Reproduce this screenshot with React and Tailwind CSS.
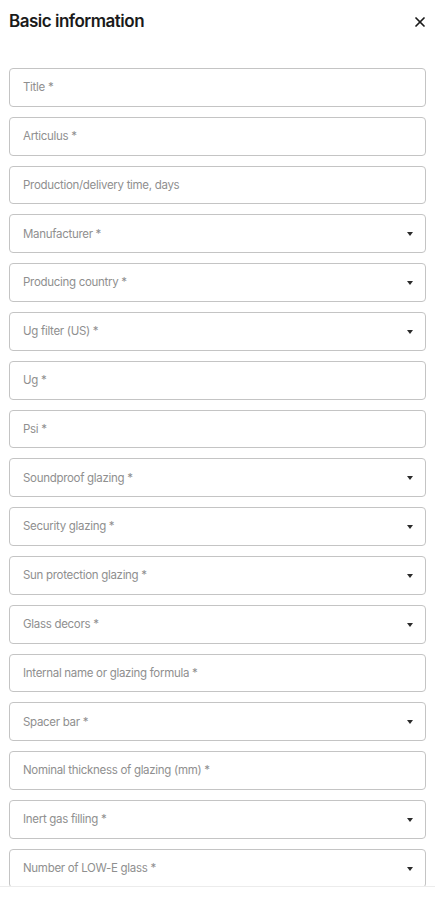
import { X } from 'lucide-react';

const fields = [
  { label: 'Title *' },
  { label: 'Articulus *' },
  { label: 'Production/delivery time, days' },
  { label: 'Manufacturer *', select: true },
  { label: 'Producing country *', select: true },
  { label: 'Ug filter (US) *', select: true },
  { label: 'Ug *' },
  { label: 'Psi *' },
  { label: 'Soundproof glazing *', select: true },
  { label: 'Security glazing *', select: true },
  { label: 'Sun protection glazing *', select: true },
  { label: 'Glass decors *', select: true },
  { label: 'Internal name or glazing formula *' },
  { label: 'Spacer bar *', select: true },
  { label: 'Nominal thickness of glazing (mm) *' },
  { label: 'Inert gas filling *', select: true },
  { label: 'Number of LOW-E glass *', select: true },
];

const Field = ({ label, select }) => (
  <div className="h-[38.8px] shrink-0 rounded-[4px] border border-[#c4c4c4] bg-white flex items-center pl-[13px] pr-[12px] pt-[1px]">
    <span className="text-[11.5px] tracking-[-0.3px] text-[#8f8f8f] flex-1">{label}</span>
    {select && (
      <span className="w-0 h-0 border-l-[3.5px] border-r-[3.5px] border-t-[4px] border-l-transparent border-r-transparent border-t-[#2b2b2b]" />
    )}
  </div>
);

export default function App() {
  return (
    <div
      className="h-[905px] w-[435px] bg-white flex flex-col overflow-hidden"
      style={{ fontFamily: 'Inter, "Noto Sans", sans-serif' }}
    >
      <div className="flex items-center justify-between pl-[9px] pr-[7px] pt-[3px] h-[40px] shrink-0">
        <h1 className="text-[17px] font-semibold text-[#1a1a1a] tracking-[-0.5px]">Basic information</h1>
        <X size={16} strokeWidth={2.6} className="text-[#1a1a1a]" />
      </div>
      <div className="flex-1 overflow-hidden px-[9px] pt-[28px] flex flex-col gap-[10px]">
        {fields.map((f) => (
          <Field key={f.label} {...f} />
        ))}
      </div>
      <div className="h-[19px] shrink-0 border-t border-[#ececec] bg-white" />
    </div>
  );
}
